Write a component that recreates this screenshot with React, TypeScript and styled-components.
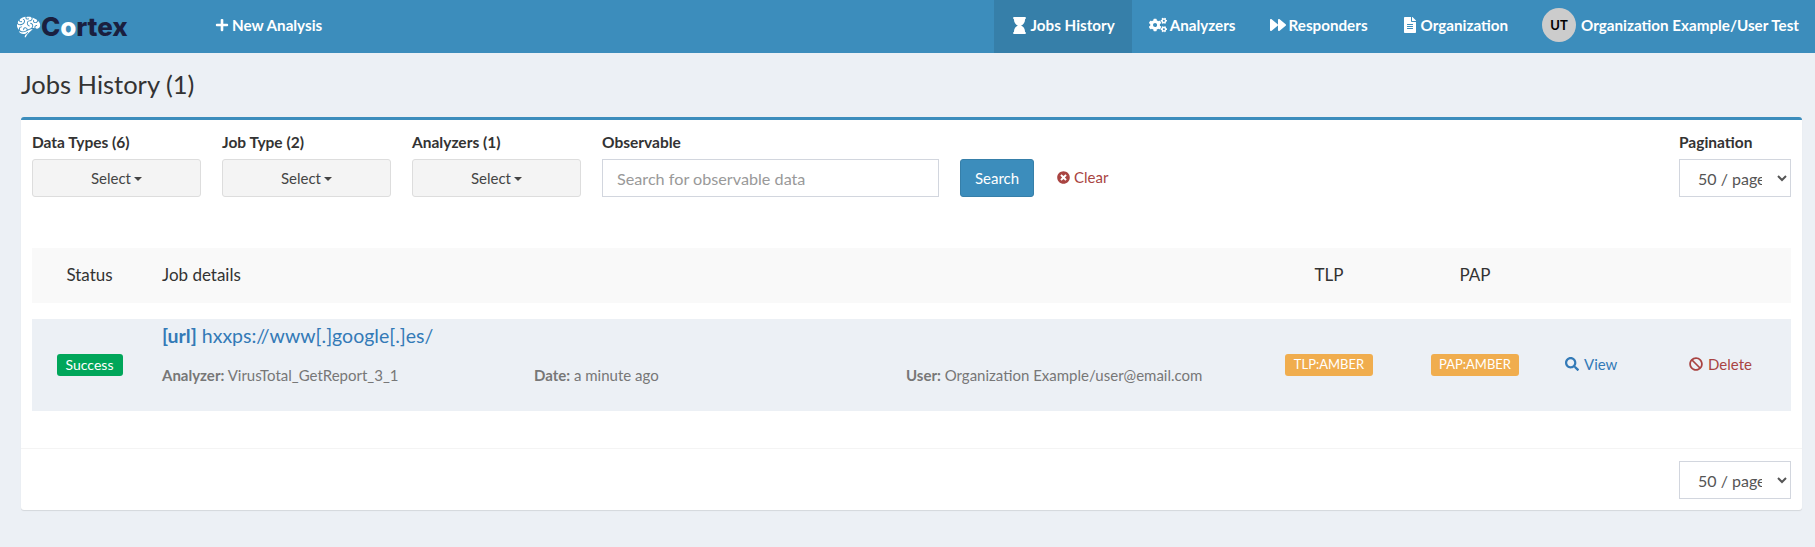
import React from 'react'
import styled, { createGlobalStyle } from 'styled-components'
import { FaPlus, FaHourglass, FaCogs, FaForward, FaFileAlt, FaTimesCircle, FaSearch, FaBan } from 'react-icons/fa'
import { GiBrain } from 'react-icons/gi'

const GlobalStyle = createGlobalStyle`
  html, body {
    margin: 0;
    padding: 0;
    background: #ecf0f5;
    color: #333;
    font-family: Lato, "Noto Sans", sans-serif;
    font-size: 15px;
  }
  * { box-sizing: border-box; }
`

const App: React.FC = () => (
  <Page>
    <GlobalStyle />
    <Navbar>
      <Logo>
        <GiBrain size={25} color="#fff" />
        <LogoText>C<LogoO>o</LogoO>rtex</LogoText>
      </Logo>
      <NewAnalysis><FaPlus size={14} /> New Analysis</NewAnalysis>
      <NavMenu>
        <NavItem $active><FaHourglass size={17} /> Jobs History</NavItem>
        <NavItem><FaCogs size={18} /> Analyzers</NavItem>
        <NavItem><FaForward size={16} /> Responders</NavItem>
        <NavItem><FaFileAlt size={16} /> Organization</NavItem>
        <UserItem>
          <Avatar>UT</Avatar>
          Organization Example/User Test
        </UserItem>
      </NavMenu>
    </Navbar>

    <Content>
      <Title>Jobs History (1)</Title>
      <Box>
        <Filters>
          {['Data Types (6)', 'Job Type (2)', 'Analyzers (1)'].map(label => (
            <FilterGroup key={label}>
              <FilterLabel>{label}</FilterLabel>
              <SelectButton>Select<Caret /></SelectButton>
            </FilterGroup>
          ))}
          <ObservableGroup>
            <FilterLabel>Observable</FilterLabel>
            <SearchInput placeholder="Search for observable data" />
          </ObservableGroup>
          <SearchButton>Search</SearchButton>
          <ClearLink><FaTimesCircle size={13} /> Clear</ClearLink>
          <PaginationGroup>
            <FilterLabel>Pagination</FilterLabel>
            <PageSelect defaultValue="50"><option value="50">50 / page</option></PageSelect>
          </PaginationGroup>
        </Filters>

        <TableHead>
          <HeadCell $center>Status</HeadCell>
          <HeadCell>Job details</HeadCell>
          <HeadCell $center>TLP</HeadCell>
          <HeadCell $center>PAP</HeadCell>
        </TableHead>

        <JobRow>
          <StatusCell><SuccessBadge>Success</SuccessBadge></StatusCell>
          <Details>
            <JobTitle><strong>[url]</strong> hxxps://www[.]google[.]es/</JobTitle>
            <Meta>
              <MetaItem><strong>Analyzer:</strong> VirusTotal_GetReport_3_1</MetaItem>
              <MetaItem><strong>Date:</strong> a minute ago</MetaItem>
              <MetaItem><strong>User:</strong> Organization Example/user@email.com</MetaItem>
            </Meta>
          </Details>
          <StatusCell><AmberBadge>TLP:AMBER</AmberBadge></StatusCell>
          <StatusCell><AmberBadge>PAP:AMBER</AmberBadge></StatusCell>
          <ViewAction><FaSearch size={14} /> View</ViewAction>
          <DeleteAction><FaBan size={14} /> Delete</DeleteAction>
        </JobRow>

        <BoxFooter>
          <PageSelect defaultValue="50"><option value="50">50 / page</option></PageSelect>
        </BoxFooter>
      </Box>
    </Content>
  </Page>
)

export default App

const Page = styled.div`
  min-height: 547px;
`

const Navbar = styled.header`
  display: flex;
  align-items: center;
  height: 53px;
  background: #3c8dbc;
  color: #fff;
  font-weight: 700;
  font-size: 15.2px;
`

const Logo = styled.div`
  display: flex;
  align-items: center;
  gap: 0;
  width: 215px;
  padding-left: 16px;
`

const LogoText = styled.span`
  font-family: Inter, sans-serif;
  font-weight: 800;
  font-size: 26px;
  letter-spacing: -0.1px;
  color: #1a1f3f;
`

const LogoO = styled.span`
  color: #fff;
`

const NewAnalysis = styled.a`
  display: flex;
  align-items: center;
  gap: 3px;
  padding-bottom: 3px;
`

const NavMenu = styled.nav`
  display: flex;
  align-items: stretch;
  height: 100%;
  margin-left: auto;
  padding-right: 16px;
`

const NavItem = styled.a<{ $active?: boolean }>`
  display: flex;
  align-items: center;
  gap: 3px;
  padding: 0 17px 3px;
  background: ${p => (p.$active ? '#367fa9' : 'transparent')};
`

const UserItem = styled.a`
  display: flex;
  align-items: center;
  gap: 5px;
  padding: 0 0 3px 17px;
`

const Avatar = styled.span`
  display: flex;
  align-items: center;
  justify-content: center;
  width: 34px;
  height: 34px;
  border-radius: 50%;
  background: #ccc;
  color: #000;
  font-size: 13px;
`

const Content = styled.main`
  padding: 0 13px 0 21px;
`

const Title = styled.h1`
  margin: 0;
  height: 64px;
  padding-top: 15px;
  font-size: 25.5px;
  line-height: 32px;
  font-weight: 400;
  color: #333;
`

const Box = styled.section`
  height: 393px;
  padding: 0 11px;
  background: #fff;
  border-top: 3px solid #3c8dbc;
  border-radius: 3px;
  box-shadow: 0 1px 1px rgba(0, 0, 0, 0.1);
`

const Filters = styled.div`
  display: flex;
  align-items: flex-end;
  gap: 21px;
  height: 77px;
  padding-top: 12px;
`

const FilterGroup = styled.div`
  display: flex;
  flex-direction: column;
  gap: 8px;
  width: 169px;
`

const ObservableGroup = styled(FilterGroup)`
  width: 337px;
`

const PaginationGroup = styled(FilterGroup)`
  width: 112px;
  margin-left: auto;
`

const FilterLabel = styled.label`
  font-weight: 700;
  font-size: 15.5px;
  line-height: 18px;
  color: #333;
`

const SelectButton = styled.button`
  display: flex;
  align-items: center;
  justify-content: center;
  gap: 3px;
  height: 38px;
  padding-bottom: 2px;
  background: #f4f4f4;
  border: 1px solid #ddd;
  border-radius: 3px;
  color: #444;
  font: inherit;
  font-size: 15px;
`

const Caret = styled.span`
  margin-top: 2px;
  border-top: 4px solid #444;
  border-left: 4px solid transparent;
  border-right: 4px solid transparent;
`

const SearchInput = styled.input`
  height: 38px;
  padding: 0 14px;
  border: 1px solid #d2d6de;
  font: inherit;
  font-size: 16.2px;
  outline: none;
  &::placeholder { color: #999; }
`

const SearchButton = styled.button`
  width: 74px;
  height: 38px;
  padding-bottom: 2px;
  background: #3c8dbc;
  border: 1px solid #367fa9;
  border-radius: 3px;
  color: #fff;
  font: inherit;
  font-size: 15px;
`

const ClearLink = styled.a`
  display: flex;
  align-items: center;
  gap: 4px;
  height: 38px;
  padding-bottom: 2px;
  margin-left: 2px;
  color: #a94442;
  font-size: 15px;
`

const PageSelect = styled.select`
  width: 112px;
  height: 38px;
  padding: 0 12px 0 14px;
  background: #fff;
  border: 1px solid #d2d6de;
  border-radius: 0;
  color: #555;
  font: inherit;
  font-size: 16px;
`

const TableHead = styled.div`
  display: grid;
  grid-template-columns: 115px 1109px 146px 146px 1fr;
  align-items: center;
  height: 55px;
  margin-top: 51px;
  padding-bottom: 2px;
  background: #f9f9f9;
`

const HeadCell = styled.div<{ $center?: boolean }>`
  padding-left: ${p => (p.$center ? 0 : '15px')};
  text-align: ${p => (p.$center ? 'center' : 'left')};
  font-size: 17px;
  color: #333;
`

const JobRow = styled.div`
  display: grid;
  grid-template-columns: 115px 1109px 146px 146px 124px 1fr;
  height: 92px;
  margin-top: 16px;
  background: #ecf0f5;
`

const StatusCell = styled.div`
  display: flex;
  align-items: center;
  justify-content: center;
`

const Badge = styled.span`
  display: inline-flex;
  align-items: center;
  justify-content: center;
  height: 22px;
  padding-bottom: 2px;
  border-radius: 3px;
  color: #fff;
  font-size: 13px;
`

const SuccessBadge = styled(Badge)`
  width: 66px;
  background: #00a65a;
  font-size: 14px;
`

const AmberBadge = styled(Badge)`
  width: 88px;
  background: #f0ad4e;
`

const Details = styled.div`
  padding: 3px 0 0 15px;
`

const JobTitle = styled.div`
  font-size: 19.5px;
  line-height: 28px;
  color: #337ab7;
  strong { font-weight: 700; }
`

const Meta = styled.div`
  display: grid;
  grid-template-columns: repeat(3, 372px);
  margin-top: 15px;
  color: #777;
  font-size: 15px;
  line-height: 20px;
`

const MetaItem = styled.div`
  strong { font-weight: 700; }
`

const ActionCell = styled.a`
  display: flex;
  align-items: center;
  gap: 5px;
  font-size: 15px;
  padding-bottom: 2px;
`

const ViewAction = styled(ActionCell)`
  padding-left: 17px;
  color: #337ab7;
`

const DeleteAction = styled(ActionCell)`
  padding-left: 17px;
  color: #a94442;
`

const BoxFooter = styled.div`
  display: flex;
  justify-content: flex-end;
  align-items: flex-start;
  margin: 37px -11px 0;
  padding: 12px 11px 0;
  border-top: 1px solid #f4f4f4;
`
